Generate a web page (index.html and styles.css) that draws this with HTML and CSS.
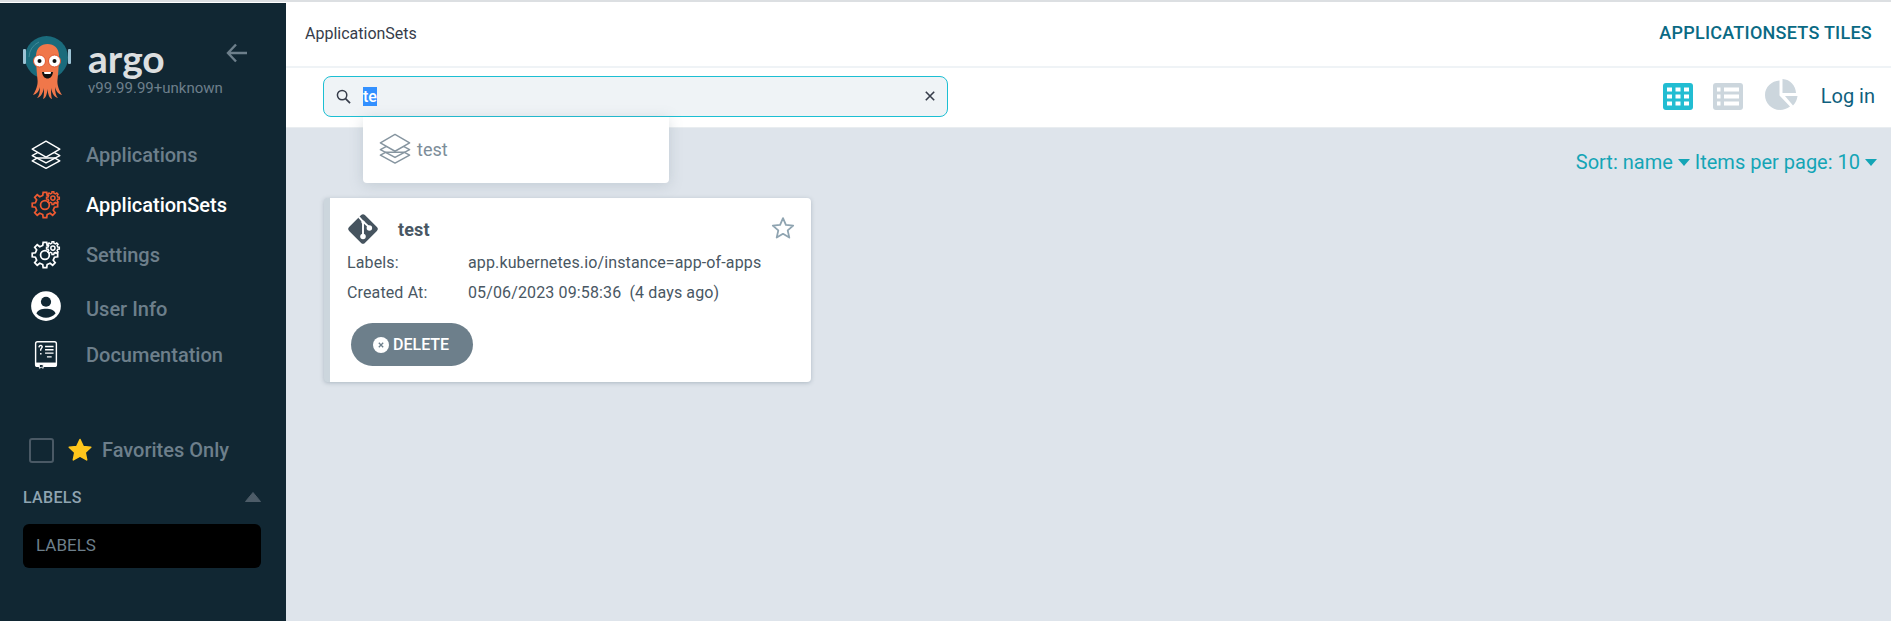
FILE: index.html
```html
<!DOCTYPE html>
<html lang="en">

<head>
    <meta charset="UTF-8">
    <meta name="viewport" content="width=device-width, initial-scale=1.0">
    <title>ApplicationSets</title>
    <link rel="stylesheet" href="styles.css">
</head>

<body>
    <svg class="defs" width="0" height="0">
        <defs>
            <path id="gear" d="M7.8-1.8 10.4-1.46 10.4 1.46 7.8 1.8 6.78 4.24 8.39 6.32 6.32 8.39 4.24 6.78 1.8 7.8 1.46 10.4-1.46 10.4-1.8 7.8-4.24 6.78-6.32 8.39-8.39 6.32-6.78 4.24-7.8 1.8-10.4 1.46-10.4-1.46-7.8-1.8-6.78-4.24-8.39-6.32-6.32-8.39-4.24-6.78-1.8-7.8-1.46-10.4 1.46-10.4 1.8-7.8 4.24-6.78 6.32-8.39 8.39-6.32 6.78-4.24Z" />
            <g id="gears" fill="none" stroke="currentColor">
                <g transform="translate(15 16) scale(1.15)" stroke-width="1.4">
                    <use href="#gear" />
                    <circle r="3.600" />
                </g>
                <g transform="translate(22.500 9.500) scale(.58)" stroke-width="2.400" fill="#112733">
                    <use href="#gear" />
                    <circle r="3.400" />
                </g>
            </g>
            <g id="layers" fill="none" stroke="currentColor" stroke-width="1.3" stroke-linejoin="round">
                <path d="M3 21.500 16 28.500 29 21.500 24 18.800 8 18.800Z" />
                <path d="M3 16.500 16 23.500 29 16.500 24 13.800 8 13.800Z" />
                <path d="M16 3 29 10.500 16 18 3 10.500Z" fill="var(--layer-fill)" />
            </g>
        </defs>
    </svg>

    <aside class="sidebar">
        <div class="brand">
            <svg class="logo" viewBox="0 0 48 64">
                <circle cx="23.500" cy="22.500" r="21.500" fill="#1a6b7c" />
                <path d="M6 22A18 18 0 0 1 16 7" fill="none" stroke="#3f8a99" />
                <rect x="0" y="14" width="3" height="15" rx="1" fill="#9cc3d5" />
                <rect x="45" y="14" width="3" height="15" rx="1" fill="#9cc3d5" />
                <path d="M15 50C14 40 13 30 13 21 13 13 18 9 24.500 9S36 13 36 21C36 30 35 40 34 50Z" fill="#f0774a" />
                <path d="M15 46C14 53 12 57 10 60 14 59 16 56 17 52 17 57 16 61 14 63 18 62 20 58 21 53 21 58 21 61 20 64 23 63 24 59 24.500 54 25 59 26 63 29 64 28 61 28 58 28 53 29 58 31 62 35 63 33 61 32 57 32 52 33 56 35 59 39 60 37 57 35 53 34 46Z" fill="#f0774a" />
                <circle cx="16.500" cy="26" r="6" fill="#fff" stroke="#e0562e" />
                <circle cx="31.500" cy="26" r="6" fill="#fff" stroke="#e0562e" />
                <circle cx="16.500" cy="26" r="2" fill="#111" />
                <circle cx="31.500" cy="26" r="2" fill="#111" />
                <path d="M19 37H30C29.500 41.500 27 43.500 24.500 43.500S19.500 41.500 19 37Z" fill="#111" />
                <path d="M21 37H28L27.500 39H21.500Z" fill="#fff" />
            </svg>
            <div class="brand-text">
                <span class="brand-name">argo</span>
                <span class="version">v99.99.99+unknown</span>
            </div>
            <svg class="back" viewBox="0 0 22 20">
                <path d="M10 1.500 2 10 10 18.500M2 10H21" fill="none" stroke="#6d7f8b" stroke-width="2.400" />
            </svg>
        </div>

        <nav class="nav">
            <a class="nav-item">
                <svg class="nav-icon white" viewBox="0 0 32 32"><use href="#layers" /></svg>
                Applications
            </a>
            <a class="nav-item active">
                <svg class="nav-icon red" viewBox="0 0 32 32"><use href="#gears" /></svg>
                ApplicationSets
            </a>
            <a class="nav-item">
                <svg class="nav-icon white" viewBox="0 0 32 32"><use href="#gears" /></svg>
                Settings
            </a>
            <a class="nav-item tall">
                <svg class="nav-icon white user-icon" viewBox="0 0 32 32">
                    <circle cx="16" cy="16" r="14" fill="#fff" />
                    <circle cx="16" cy="12" r="4.800" fill="#112733" />
                    <path d="M7 23C8 19.500 12 18.500 16 18.500S24 19.500 25 23C23 25.500 19.500 27 16 27S9 25.500 7 23Z" fill="#112733" />
                </svg>
                User Info
            </a>
            <a class="nav-item short">
                <svg class="nav-icon white" viewBox="-2 -2 36 36">
                    <path d="M7 2H25Q27 2 27 4V26Q27 28 25 28H7Q5 28 5 26V4Q5 2 7 2Z" fill="none" stroke="#fff" stroke-width="1.500" />
                    <path d="M5 24H27V28H5Z" fill="#fff" />
                    <path d="M9 26H13V30L11 29 9 30Z" fill="#112733" stroke="#fff" />
                    <path d="M15 7H24M15 10.500H24M15 14H24M17 18H22" stroke="#fff" stroke-width="1.500" />
                    <path d="M8.500 8Q9 5.500 11 6 13 7 11 9 10 10 10.500 11.500M10.500 14V15.500" fill="none" stroke="#fff" stroke-width="1.500" />
                </svg>
                Documentation
            </a>
        </nav>

        <label class="favorites">
            <span class="checkbox"></span>
            <svg class="fav-star" viewBox="0 0 24 24">
                <path d="M12 1.500 15.200 8.400 22.800 9.300 17.200 14.400 18.700 21.900 12 18.200 5.300 21.900 6.800 14.400 1.200 9.300 8.800 8.400Z" fill="#ffc61c" stroke="#ffc61c" stroke-width="1.500" stroke-linejoin="round" />
            </svg>
            Favorites Only
        </label>

        <div class="filter-head">
            <span>LABELS</span>
            <svg class="filter-caret" viewBox="0 0 16 10">
                <path d="M8 .500 15.500 9.500H.500Z" fill="#4d5c68" stroke="#4d5c68" stroke-linejoin="round" />
            </svg>
        </div>
        <div class="filter-input">LABELS</div>
    </aside>

    <main class="main">
        <header class="topbar">
            <span class="crumb">ApplicationSets</span>
            <span class="page-title">APPLICATIONSETS TILES</span>
        </header>

        <div class="toolbar">
            <div class="search">
                <svg class="search-icon" viewBox="0 0 16 16">
                    <circle cx="6.500" cy="6.500" r="5" fill="none" stroke="#363c4a" stroke-width="1.600" />
                    <path d="M10.200 10.200 15 15" stroke="#363c4a" stroke-width="1.800" />
                </svg>
                <span class="search-text"><span class="selected">te</span></span>
                <svg class="search-clear" viewBox="0 0 10 10">
                    <path d="M.800 .800 9.200 9.200M9.200 .800 .800 9.200" stroke="#363c4a" stroke-width="1.600" />
                </svg>
            </div>

            <div class="view-icons">
                <svg class="view-icon on" width="30" height="27" viewBox="0 0 30 27">
                    <rect width="30" height="27" rx="3" fill="#22bdd2" />
                    <path d="M4 4.500H9V8.500H4ZM12.500 4.500H17.500V8.500H12.500ZM21 4.500H26V8.500H21ZM4 11.500H9V15.500H4ZM12.500 11.500H17.500V15.500H12.500ZM21 11.500H26V15.500H21ZM4 18.500H9V22.500H4ZM12.500 18.500H17.500V22.500H12.500ZM21 18.500H26V22.500H21Z" fill="#fff" />
                </svg>
                <svg class="view-icon" width="30" height="27" viewBox="0 0 30 27">
                    <rect width="30" height="27" rx="3" fill="#ccd6dd" />
                    <path d="M4 4.500H7.500V8.500H4ZM11 4.500H26V8.500H11ZM4 11.500H7.500V15.500H4ZM11 11.500H26V15.500H11ZM4 18.500H7.500V22.500H4ZM11 18.500H26V22.500H11Z" fill="#fff" />
                </svg>
                <svg class="view-icon pie" width="33" height="31" viewBox="0 0 33 31">
                    <path d="M14.500 1.500V16.500L25 27.500C22 29.800 18.500 31 15 31 6.500 31 0 24 0 16 0 8 6.500 2 14.500 1.500Z" fill="#ccd6dd" />
                    <path d="M17.500 0C25.500 .5 30.500 6.500 31 14H17.500Z" fill="#ccd6dd" />
                    <path d="M20 17H32.500C32 21 30.500 24 28 26.500Z" fill="#ccd6dd" />
                </svg>
                <span class="login">Log in</span>
            </div>
        </div>

        <section class="content">
            <div class="sort-row">
                <span>Sort: name</span><span class="caret"></span>
                <span>Items per page: 10</span><span class="caret"></span>
            </div>

            <div class="suggestions">
                <svg class="suggest-icon" viewBox="0 0 32 32"><use href="#layers" /></svg>
                test
            </div>

            <article class="card">
                <div class="card-head">
                    <svg class="git-icon" viewBox="0 0 32 32">
                        <rect x="5.500" y="5.500" width="21" height="21" rx="2.500" transform="rotate(45 16 16)" fill="#46545f" />
                        <path d="M12 4.500 16 9V23M16 9 22 14.500" fill="none" stroke="#fff" stroke-width="1.800" />
                        <circle cx="16" cy="23" r="2.600" fill="#fff" />
                        <circle cx="22" cy="15" r="2.600" fill="#fff" />
                        <circle cx="16" cy="9.500" r="1.600" fill="#fff" />
                    </svg>
                    <span class="card-name">test</span>
                    <svg class="card-star" viewBox="0 0 24 24">
                        <path d="M12 2.200 14.900 8.900 22.200 9.600 16.700 14.400 18.300 21.600 12 17.800 5.700 21.600 7.300 14.400 1.800 9.600 9.100 8.900Z" fill="none" stroke="#8fa4b1" stroke-width="1.800" stroke-linejoin="round" />
                    </svg>
                </div>
                <div class="card-row">
                    <span class="card-label">Labels:</span>
                    <span>app.kubernetes.io/instance=app-of-apps</span>
                </div>
                <div class="card-row">
                    <span class="card-label">Created At:</span>
                    <span>05/06/2023 09:58:36&nbsp; (4 days ago)</span>
                </div>
                <button class="delete-btn">
                    <svg class="delete-icon" viewBox="0 0 16 16">
                        <circle cx="8" cy="8" r="8" fill="#fff" />
                        <path d="M5.800 5.800 10.200 10.200M10.200 5.800 5.800 10.200" stroke="#6d7f8b" stroke-width="1.300" />
                    </svg>
                    DELETE
                </button>
            </article>
        </section>
    </main>
</body>

</html>
```

FILE: styles.css
```css
* {
    box-sizing: border-box;
}

html,
body {
    height: 100%;
}

body {
    margin: 0;
    padding-top: 3px;
    display: flex;
    overflow: hidden;
    background: #fff;
    font-family: Roboto, "Liberation Sans", sans-serif;
    position: relative;
}

/* thin grey line at the very top of the window */
body::before {
    content: "";
    position: absolute;
    top: 0;
    left: 0;
    right: 0;
    height: 2px;
    background: #dcdfe2;
}

.defs {
    position: absolute;
}

/* sidebar */
.sidebar {
    width: 286px;
    flex-shrink: 0;
    padding: 32px 25px 0 23px;
    background: #112733;
    color: #6d7f8b;
    --layer-fill: #112733;
}

.brand {
    display: flex;
    height: 95px;
}

.logo {
    width: 48px;
    height: 64px;
    flex-shrink: 0;
}

.brand-text {
    display: flex;
    flex-direction: column;
    margin-left: 17px;
    width: 136px;
}

.brand-name {
    height: 44px;
    padding-top: 3px;
    color: #dcdfe0;
    font-family: Lato, sans-serif;
    font-size: 39px;
    font-weight: 700;
    line-height: 40px;
}

.version {
    font-size: 15px;
    line-height: 18px;
    white-space: nowrap;
}

.back {
    width: 22px;
    height: 20px;
    margin: 8px 0 0 2px;
}

.nav-item {
    display: flex;
    align-items: center;
    height: 50px;
    font-size: 20px;
    font-weight: 500;
    gap: 23px;
    margin-left: 6px;
}

.nav-item.tall {
    height: 58px;
}

.nav-item.short {
    height: 34px;
}

.nav-item.active {
    color: #fff;
}

.nav-icon {
    width: 34px;
    height: 34px;
    flex-shrink: 0;
}

.user-icon {
    margin-top: -7px;
}

.white {
    color: #fff;
}

.red {
    color: #ee5a32;
}

.favorites {
    display: flex;
    align-items: center;
    height: 26px;
    margin: 65px 0 0 6px;
    font-size: 20px;
    font-weight: 500;
}

.checkbox {
    width: 25px;
    height: 25px;
    border: 2px solid #4a5965;
    border-radius: 3px;
}

.fav-star {
    width: 24px;
    height: 24px;
    margin: 0 10px 0 14px;
}

.filter-head {
    display: flex;
    justify-content: space-between;
    align-items: center;
    height: 20px;
    margin-top: 24px;
    color: #8fa4b1;
    font-size: 16px;
    font-weight: 500;
    letter-spacing: .3px;
}

.filter-caret {
    width: 16px;
    height: 10px;
}

.filter-input {
    height: 44px;
    margin-top: 17px;
    padding-left: 13px;
    border-radius: 6px;
    background: #000;
    font-size: 17px;
    line-height: 42px;
}

/* main column */
.main {
    flex: 1;
    min-width: 0;
    display: flex;
    flex-direction: column;
}

.topbar {
    display: flex;
    justify-content: space-between;
    align-items: center;
    height: 65px;
    padding: 0 19px 4px 19px;
    border-bottom: 2px solid #eff3f6;
}

.crumb {
    padding-top: 2px;
    color: #363c4a;
    font-size: 16px;
}

.page-title {
    color: #0a6a84;
    font-size: 18px;
    font-weight: 500;
    letter-spacing: .25px;
}

.toolbar {
    display: flex;
    justify-content: space-between;
    align-items: center;
    height: 60px;
    padding: 0 16px 3px 37px;
    border-bottom: 1px solid #e9edf0;
}

.search {
    display: flex;
    align-items: center;
    width: 625px;
    height: 41px;
    padding: 0 12px;
    border: 1px solid #1cbfd3;
    border-radius: 8px;
    background: #eff3f6;
}

.search-icon {
    width: 15px;
    height: 15px;
    flex-shrink: 0;
}

.search-text {
    flex: 1;
    margin-left: 12px;
    font-size: 16px;
    font-weight: 500;
}

.selected {
    background: #3390ff;
    color: #fff;
}

.search-clear {
    width: 10px;
    height: 10px;
}

.view-icons {
    display: flex;
    align-items: center;
}

.view-icon {
    margin-right: 20px;
}

.view-icon.pie {
    margin: -3px 23px 0 2px;
}

.login {
    color: #0f5f7e;
    font-size: 20px;
}

/* tiles */
.content {
    flex: 1;
    position: relative;
    padding: 0 14px 0 38px;
    background: #dee4eb;
}

.sort-row {
    display: flex;
    justify-content: flex-end;
    align-items: center;
    gap: 5px;
    height: 24px;
    margin-top: 22px;
    color: #14a5b6;
    font-size: 20px;
}

.caret {
    width: 0;
    height: 0;
    border-left: 6.5px solid transparent;
    border-right: 6.5px solid transparent;
    border-top: 7px solid #14a5b6;
}

.suggestions {
    position: absolute;
    top: -11px;
    left: 77px;
    display: flex;
    align-items: center;
    gap: 4px;
    width: 306px;
    height: 66px;
    padding: 0 0 2px 14px;
    border-radius: 0 0 4px 4px;
    background: #fff;
    box-shadow: 0 2px 14px rgba(110, 130, 145, .25);
    color: #7d8d99;
    font-size: 18px;
    --layer-fill: #fff;
}

.suggest-icon {
    width: 36px;
    height: 36px;
    color: #8695a0;
}

.card {
    width: 487px;
    height: 184px;
    margin-top: 24px;
    padding: 15px 16px 0 17px;
    border-left: 6px solid #ccd6dd;
    border-radius: 4px;
    background: #fff;
    box-shadow: 0 1px 4px rgba(100, 120, 135, .4);
    color: #495763;
    font-size: 16px;
    letter-spacing: .13px;
}

.card-head {
    display: flex;
    align-items: center;
    height: 32px;
    margin-bottom: 2px;
}

.git-icon {
    width: 34px;
    height: 34px;
    margin-left: -1px;
    flex-shrink: 0;
}

.card-name {
    flex: 1;
    margin-left: 18px;
    font-size: 18px;
    font-weight: 700;
}

.card-star {
    width: 24px;
    height: 24px;
    margin-top: -2px;
}

.card-row {
    display: flex;
    align-items: center;
    height: 30px;
}

.card-label {
    width: 121px;
}

.delete-btn {
    display: flex;
    align-items: center;
    gap: 4px;
    width: 122px;
    height: 43px;
    margin: 16px 0 0 4px;
    padding: 0 0 0 22px;
    border: 0;
    border-radius: 22px;
    background: #6d7f8b;
    color: #fff;
    font-family: inherit;
    font-size: 16px;
    font-weight: 500;
}

.delete-icon {
    width: 16px;
    height: 16px;
}
```
